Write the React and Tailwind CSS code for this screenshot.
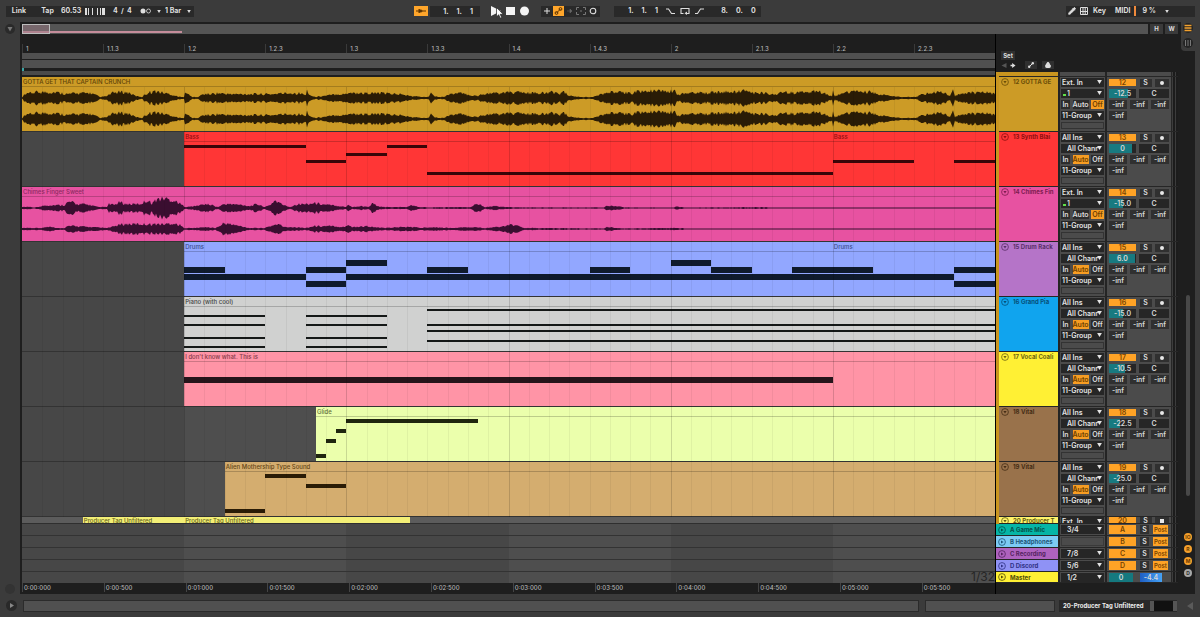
import { Fragment } from 'react';
import { Lock, Pencil } from 'lucide-react';

const BEATS = 6;
const pct = (beat) => `${(beat / BEATS) * 100}%`;

// each note is [start beat, end beat, top]
const chord = (start, end, tops) => tops.map((top) => [start, end, top]);

const tracks = [
    {
        name: '12 GOTTA GE', header: 'bg-[#cc9b26]', headerText: 'text-[#6b4e08]', audio: true, volume: '-12.5', fill: 72,
        wave: 'gold', clips: [{ title: 'GOTTA GET THAT CAPTAIN CRUNCH', start: 0, end: 6, color: 'bg-[#cc9b26]', text: 'text-[#5c4207]' }],
    },
    {
        name: '13 Synth Blai', header: 'bg-[#ff3636]', headerText: 'text-[#8f0f0f]', volume: '0', fill: 84, noteHeight: 3, noteColor: 'bg-[#3a0508]',
        clips: [
            { title: 'Bass', start: 1, end: 5, color: 'bg-[#ff3636]', text: 'text-[#8f0f0f]' },
            { title: 'Bass', start: 5, end: 6, color: 'bg-[#ff3636]', text: 'text-[#8f0f0f]' },
        ],
        notes: [[1, 1.75, 13], [1.75, 2, 28], [2, 2.25, 21], [2.25, 2.5, 13], [2.5, 5, 40], [5, 5.5, 28], [5.75, 6, 28]],
    },
    {
        name: '14 Chimes Fin', header: 'bg-[#e752a1]', headerText: 'text-[#7d1c50]', audio: true, volume: '-15.0', fill: 52,
        wave: 'pink', clips: [{ title: 'Chimes Finger Sweet', start: 0, end: 6, color: 'bg-[#e752a1]', text: 'text-[#8c2a60]' }],
    },
    {
        name: '15 Drum Rack', header: 'bg-[#b574c8]', headerText: 'text-[#5a2f68]', volume: '6.0', fill: 96, noteHeight: 6, noteColor: 'bg-[#0f1a2c]',
        clips: [
            { title: 'Drums', start: 1, end: 5, color: 'bg-[#92a7ff]', text: 'text-[#3c4d8c]' },
            { title: 'Drums', start: 5, end: 6, color: 'bg-[#92a7ff]', text: 'text-[#3c4d8c]' },
        ],
        notes: [
            [1, 1.25, 25], [1.75, 2, 25], [2.5, 2.75, 25], [3.5, 3.75, 25], [4.25, 4.5, 25], [4.75, 5.25, 25], [5.75, 6, 25],
            [1, 1.75, 32], [2, 5.75, 32], [1.75, 2, 39], [5.75, 6, 39], [2, 2.25, 18], [4, 4.25, 18],
        ],
    },
    {
        name: '16 Grand Pia', header: 'bg-[#10a4ee]', headerText: 'text-[#06507a]', volume: '-15.0', fill: 52, noteHeight: 2, noteColor: 'bg-[#141817]',
        clips: [{ title: 'Piano (with cool)', start: 1, end: 6, color: 'bg-[#d0d1d0]', text: 'text-[#444444]' }],
        notes: [...chord(1, 1.5, [18, 27, 40, 49]), ...chord(1.75, 2.25, [18, 27, 40, 49]), ...chord(2.5, 6, [12, 27, 33, 43])],
    },
    {
        name: '17 Vocal Coali', header: 'bg-[#fff034]', headerText: 'text-[#6d6510]', volume: '-10.5', fill: 60, noteHeight: 6, noteColor: 'bg-[#26141a]',
        clips: [{ title: "I don't know what. This is", start: 1, end: 6, color: 'bg-[#ff94a6]', text: 'text-[#843a48]' }],
        notes: [[1, 5, 25]],
    },
    {
        name: '18 Vital', header: 'bg-[#99724b]', headerText: 'text-[#452d15]', volume: '-22.5', fill: 40, noteHeight: 4, noteColor: 'bg-[#1f260f]',
        clips: [{ title: 'Glide', start: 1.8125, end: 6, color: 'bg-[#ebffac]', text: 'text-[#62703a]' }],
        notes: [[2, 2.8125, 12], [1.9375, 2, 22], [1.875, 1.9375, 32], [1.8125, 1.875, 47]],
    },
    {
        name: '19 Vital', header: 'bg-[#99724b]', headerText: 'text-[#452d15]', volume: '-25.0', fill: 36, noteHeight: 4, noteColor: 'bg-[#2a1c06]',
        clips: [{ title: 'Alien Mothership Type Sound', start: 1.25, end: 6, color: 'bg-[#d4ad6f]', text: 'text-[#654615]' }],
        notes: [[1.5, 1.75, 12], [1.75, 2, 22], [1.25, 1.5, 47]],
    },
];

const returns = [
    { id: 'A', name: 'A Game Mic', color: 'bg-[#05b5a6]', text: 'text-[#04514b]', out: '3/4' },
    { id: 'B', name: 'B Headphones', color: 'bg-[#7ccbf5]', text: 'text-[#1d5678]' },
    { id: 'C', name: 'C Recording', color: 'bg-[#ae62be]', text: 'text-[#54235f]', out: '7/8' },
    { id: 'D', name: 'D Discord', color: 'bg-[#8f92f5]', text: 'text-[#2f3184]', out: '5/6' },
];

const rulerLabels = [[0, '1'], [0.5, '1.1.3'], [1, '1.2'], [1.5, '1.2.3'], [2, '1.3'], [2.5, '1.3.3'], [3, '1.4'], [3.5, '1.4.3'], [4, '2'], [4.5, '2.1.3'], [5, '2.2'], [5.5, '2.2.3']];
const timeLabels = ['0:00:000', '0:00:500', '0:01:000', '0:01:500', '0:02:000', '0:02:500', '0:03:000', '0:03:500', '0:04:000', '0:04:500', '0:05:000', '0:05:500'];

// x, half height
const goldEnvelope = '22,0 24,3 30,5 37,6 45,6 55,6 62,5 68,4 75,5 90,5 96,3 100,1 107,2 112,5 118,6 125,6 130,5 136,2 142,1 145,4 150,6 154,7 160,6 165,5 170,4 176,2 182,1 184,1 185,8 188,4 192,1 198,1 203,4 210,4 218,5 230,4 270,4 285,5 300,5 306,3 307,8 310,3 315,1 322,2 330,3 337,4 345,4 349,6 355,5 380,5 400,4 410,2 425,1 429,2 431,8 434,2 440,1 446,2 449,4 460,5 470,3 478,2 482,4 490,5 500,5 515,6 530,5 545,5 553,6 560,5 564,6 568,3 572,2 580,1 592,1 597,2 600,4 607,5 612,6 630,5 638,7 675,7 677,3 685,5 695,6 705,5 715,6 735,6 742,7 747,8 753,5 765,5 775,4 785,6 795,5 803,6 812,7 822,6 828,3 832,2 833,8 835,2 841,4 848,6 858,7 865,6 872,6 877,4 885,3 892,2 900,1 915,1 920,3 928,5 938,6 945,5 950,2 953,8 955,2 960,4 970,6 980,5 988,6 995,4';
const pinkLeft = '22,1 30,1 35,.5 42,2 50,3 64,3 68,6 72,6 76,4 84,4 90,3 98,1 107,1 109,4 114,3 120,6 126,4 140,4 147,8 152,5 157,9 165,10 172,8 178,6 182,3 186,1 195,2 205,4 212,3 218,1 224,4 232,4 243,3 250,2 257,4 265,1 270,3 275,8 278,6 284,3 290,1 297,4 305,4 315,5 322,4 330,3 340,2 346,1 348,4 352,1 362,2 368,1 373,5 377,2 382,1 407,1 412,3 418,1 430,.8 470,.8 474,3 477,4 481,3 485,1 495,2 505,1 520,.6 604,.6 606,2 615,2 625,.6 674,.5 676,1.5 685,.5 760,.8 780,.5 995,.5';
const pinkRight = '22,1 42,1 50,3 56,1 64,1 68,3 75,3 90,2 107,1 112,2 118,4 124,5 165,5 172,6 180,4 184,1 195,1 205,2 215,1 222,4 223,6 230,5 240,3 250,1 265,1 273,4 278,5 285,2 297,2 305,1 315,3 330,3 345,2 348,5 352,2 368,3 372,2 385,1 400,2 415,2 420,1 430,2 452,1 472,2 485,1 497,2 507,3 512,5 518,3 524,1 604,.6 607,2 620,.6 675,1 690,.5 995,.5';

function wavePath(envelope, mid) {
    const points = envelope.split(' ').map((p) => p.split(',').map(Number));
    const top = [];
    const bottom = [];
    let k = 0;
    for (let x = 22; x <= 995; x++) {
        while (k < points.length - 2 && x > points[k + 1][0]) k++;
        const [x0, a0] = points[k];
        const [x1, a1] = points[k + 1];
        const amp = a0 + ((a1 - a0) * (x - x0)) / (x1 - x0);
        const noise = Math.abs(Math.sin(x * 12.9898) * 43758.5453) % 1;
        const h = Math.max(0.5, amp * (0.65 + noise * 0.6));
        top.push(`${x - 22},${(mid - h).toFixed(1)}`);
        bottom.unshift(`${x - 22},${(mid + h).toFixed(1)}`);
    }
    return `M${top.join('L')}L${bottom.join('L')}Z`;
}

const waves = {
    gold: { fill: '#2a1c06', d: wavePath(goldEnvelope, 21) + wavePath(goldEnvelope, 42) },
    pink: { fill: '#3a0e30', d: wavePath(pinkLeft, 21) + wavePath(pinkRight, 42) },
};

function Caret({ className }) {
    return <svg viewBox="0 0 6 5" className={className} aria-hidden="true"><path d="M0 0h6L3 5z" fill="currentColor" /></svg>;
}

function Dropdown({ label, value, indent }) {
    return (
        <div className="relative h-[9px] bg-[#262626] text-[#e4e4e4]">
            <select aria-label={label} className={`block h-[9px] w-full appearance-none pr-[6px] leading-[9px] outline-none ${indent ? 'pl-[6px]' : 'pl-px'}`}>
                <option>{value}</option>
            </select>
            <Caret className="pointer-events-none absolute top-[2px] right-[2px] h-[4px] w-[5px]" />
        </div>
    );
}

function Field({ label, value, className }) {
    return <input aria-label={label} defaultValue={value} className={`block h-[9px] min-w-0 p-0 text-center leading-[9px] text-[#d8d8d8] outline-none ${className}`} />;
}

function FoldButton({ label, right }) {
    return (
        <button aria-label={label} className="h-[8px] w-[8px] shrink-0">
            <svg viewBox="0 0 8 8" className="h-[8px] w-[8px]">
                <circle cx="4" cy="4" r="3.4" fill="none" stroke="currentColor" strokeWidth="0.8" />
                <path d={right ? 'M3 2.4 5.6 4 3 5.6z' : 'M2.4 3h3.2L4 5.6z'} fill="currentColor" />
            </svg>
        </button>
    );
}

function Clip({ clip }) {
    return (
        <div className={`absolute inset-y-0 overflow-hidden ${clip.color}`} style={{ left: pct(clip.start), width: pct(clip.end - clip.start) }}>
            <div className={`truncate pl-px text-[6px] font-medium ${clip.short ? 'leading-[7px]' : 'h-[10px] border-b border-black/20 leading-[9px]'} ${clip.text}`}>{clip.title}</div>
        </div>
    );
}

function Lane({ track }) {
    const wave = waves[track.wave];
    return (
        <div className="h-[55px] border-b border-[#333333]">
            <div className="relative h-full">
                {track.clips.map((clip) => <Clip key={clip.start} clip={clip} />)}
                {wave && (
                    <svg viewBox="0 0 973 54" preserveAspectRatio="none" className="absolute inset-0 h-full w-full">
                        <path d={wave.d} fill={wave.fill} />
                    </svg>
                )}
                {track.notes?.map(([start, end, top]) => (
                    <div key={`${start}-${top}`} className={`absolute ${track.noteColor}`} style={{ left: pct(start), width: pct(end - start), top, height: track.noteHeight }} />
                ))}
            </div>
        </div>
    );
}

function Grid() {
    const lines = Array.from({ length: 47 }, (_, i) => (i + 1) / 8);
    return (
        <div className="pointer-events-none absolute inset-0">
            {lines.map((beat) => (
                <div key={beat} className={`absolute top-[10px] bottom-0 w-px ${beat % 1 === 0 ? 'bg-black/15' : 'bg-black/5'}`} style={{ left: pct(beat) }} />
            ))}
        </div>
    );
}

function TopBar() {
    return (
        <header className="flex h-[22px] items-center pr-[5px] pl-[6px] text-[7px] leading-[10px] font-bold text-[#dedede]">
            <div className="flex h-[11px] items-center bg-[#292929]">
                <button className="w-[30px] pr-1 text-center">Link</button>
                <button className="ml-1 w-[15px] text-center">Tap</button>
                <input aria-label="Tempo" defaultValue="60.53" className="ml-[6px] w-[22px] outline-none" />
                <button aria-label="Nudge down" className="ml-[2px]"><svg viewBox="0 0 8 7" className="h-[7px] w-[8px]"><path d="M0 0h2v7H0zM3 0h1v7H3zM7 0h1v7H7z" fill="currentColor" /></svg></button>
                <button aria-label="Nudge up" className="ml-1"><svg viewBox="0 0 8 7" className="h-[7px] w-[8px]"><path d="M0 0h1v7H0zM3 0h1v7H3zM5 0h3v7H5z" fill="currentColor" /></svg></button>
                <span className="ml-2 w-[22px] whitespace-pre">4  /  4</span>
                <button aria-label="Metronome" className="ml-[5px]">
                    <svg viewBox="0 0 11 6" className="h-[6px] w-[11px]"><circle cx="3" cy="3" r="2.5" fill="currentColor" /><circle cx="8.5" cy="3" r="2" fill="none" stroke="currentColor" strokeWidth="0.8" /></svg>
                </button>
                <Caret className="ml-[6px] h-[3px] w-[4px]" />
                <div className="relative ml-1 w-[26px]">
                    <select aria-label="Quantization" className="block w-full appearance-none outline-none"><option>1 Bar</option></select>
                    <Caret className="pointer-events-none absolute top-1 right-0 h-[3px] w-[4px]" />
                </div>
                <span className="w-[3px]" />
            </div>

            <div className="flex-[13]" />

            <div className="flex h-[11px] items-center">
                <button aria-label="Follow" className="flex h-[10px] w-[14px] items-center justify-center bg-[#ffa62b] text-[#5c3300]">
                    <svg viewBox="0 0 12 6" className="h-[6px] w-[12px]"><path d="M1 3h10M4 1v4M6 1.5v3" stroke="currentColor" fill="none" /><path d="M4 1l4 2-4 2z" fill="currentColor" /></svg>
                </button>
                <input aria-label="Position" defaultValue="1.     1.     1" className="ml-[2px] h-[11px] w-[50px] bg-[#292929] pl-[13px] outline-none" />
                <div className="relative ml-[11px] flex items-center gap-[5px] text-[#f4f4f4]">
                    <button aria-label="Play"><svg viewBox="0 0 10 10" className="h-[10px] w-[10px]"><path d="M0 0l10 5-10 5z" fill="currentColor" /></svg></button>
                    <button aria-label="Stop"><svg viewBox="0 0 9 10" className="h-[10px] w-[9px]"><path d="M0 1h9v8H0z" fill="currentColor" /></svg></button>
                    <button aria-label="Record"><svg viewBox="0 0 9 10" className="h-[10px] w-[9px]"><circle cx="4.5" cy="5" r="4.5" fill="currentColor" /></svg></button>
                    <svg viewBox="0 0 8 12" className="pointer-events-none absolute top-px left-[5px] h-[12px] w-[8px]">
                        <path d="M.5.5v9.3l2.2-2 1.5 3.4 1.5-.7-1.5-3.2h3z" fill="#fff" stroke="#222" strokeWidth="0.7" />
                    </svg>
                </div>
                <div className="ml-3 flex h-[11px] w-[59px] items-center justify-between bg-[#292929] px-[3px]">
                    <button aria-label="Overdub"><svg viewBox="0 0 6 6" className="h-[6px] w-[6px]"><path d="M3 0v6M0 3h6" stroke="currentColor" /></svg></button>
                    <button aria-label="Automation arm" className="bg-[#ffa62b] text-[#5c3300]"><svg viewBox="0 0 11 10" className="h-[10px] w-[11px]"><path d="M3.5 7l4-4" stroke="currentColor" /><circle cx="3.5" cy="7" r="1.4" fill="none" stroke="currentColor" /><circle cx="7.5" cy="3" r="1.4" fill="none" stroke="currentColor" /></svg></button>
                    <button aria-label="Re-enable automation" className="text-[#666666]"><svg viewBox="0 0 6 6" className="h-[6px] w-[6px]"><path d="M0 3h3M3 1l2 2-2 2z" fill="currentColor" stroke="currentColor" strokeWidth="0.6" /></svg></button>
                    <button aria-label="Capture" className="text-[#777777]"><svg viewBox="0 0 10 8" className="h-[8px] w-[10px]"><path d="M.5 3V.5H3M7 .5h2.5V3M9.5 5v2.5H7M3 7.5H.5V5M4 4h2" fill="none" stroke="currentColor" /></svg></button>
                    <button aria-label="Session record"><svg viewBox="0 0 8 8" className="h-[8px] w-[8px]"><circle cx="4" cy="4" r="2.8" fill="none" stroke="currentColor" strokeWidth="1.1" /></svg></button>
                </div>
                <div className="ml-[14px] flex h-[11px] w-[147px] items-center bg-[#292929]">
                    <input aria-label="Loop start" defaultValue="1.     1.     1" className="ml-[14px] w-[38px] outline-none" />
                    <button aria-label="Punch in"><svg viewBox="0 0 9 7" className="h-[7px] w-[9px]"><path d="M0 1h2.5l3 4.5H9" fill="none" stroke="currentColor" strokeWidth="1.1" /></svg></button>
                    <button aria-label="Loop" className="ml-[5px]"><svg viewBox="0 0 10 8" className="h-[8px] w-[10px]"><path d="M3.5 6.5H1v-5h8v5H7" fill="none" stroke="currentColor" strokeWidth="1.1" /><path d="M7 4.5V8L4.5 6.3z" fill="currentColor" /></svg></button>
                    <button aria-label="Punch out" className="ml-[5px]"><svg viewBox="0 0 9 7" className="h-[7px] w-[9px]"><path d="M0 5.5h2.5L5.5 1H9" fill="none" stroke="currentColor" strokeWidth="1.1" /></svg></button>
                    <input aria-label="Loop length" defaultValue="8.     0.     0" className="ml-[17px] w-[42px] outline-none" />
                </div>
            </div>

            <div className="flex-[18]" />

            <div className="flex h-[11px] w-[129px] items-center bg-[#292929]">
                <button aria-label="Draw mode" className="ml-[2px]"><Pencil className="h-[8px] w-[8px]" strokeWidth={3} fill="currentColor" /></button>
                <button aria-label="Computer MIDI keyboard" className="ml-1">
                    <svg viewBox="0 0 8 8" className="h-[8px] w-[8px]"><path d="M.5.5h7v7h-7zM3 0v8M5.2 0v8M.5 4.5h7" fill="none" stroke="currentColor" strokeWidth="1" /></svg>
                </button>
                <button className="ml-[5px]">Key</button>
                <button className="ml-[9px]">MIDI</button>
                <span className="ml-[3px] h-[10px] w-[2px] bg-[#f08a3c]" />
                <span className="ml-[7px] whitespace-nowrap">9 %</span>
                <Caret className="ml-[9px] h-[3px] w-[4px]" />
            </div>
        </header>
    );
}

function Overview() {
    return (
        <div className="flex h-[10px] items-stretch gap-[2px] pl-[2px] text-[6px] leading-[10px] font-bold text-[#dddddd]">
            <div className="relative flex-1 bg-[#545454]">
                <div className="mt-[7px] h-[2px] w-[160px] bg-[#c58d9b]" />
                <div className="absolute top-0 left-0 h-[10px] w-[28px] border border-[#bdbdbd] bg-[#9a7a84]/50" />
            </div>
            <button className="w-[13px] bg-[#3a3a3a]">H</button>
            <button className="mr-[3px] w-[13px] bg-[#3a3a3a]">W</button>
        </div>
    );
}

function Timeline() {
    return (
        <div className="min-w-0 flex-1 pl-[2px]">
            <div className="relative h-[19px] text-[6px] leading-[9px] font-medium text-[#b4b4b4]">
                {rulerLabels.map(([beat, label]) => (
                    <span key={label} className="absolute bottom-0 border-l border-[#3a3a3a] pl-[3px]" style={{ left: pct(beat) }}>{label}</span>
                ))}
            </div>
            <div className="h-[6px] bg-[#505050]" />
            <div className="mt-px h-[8px] bg-[#505050]" />
            <div className="h-[3px] w-[2px] bg-[#3ba7a7]" />
            <div className="mb-[2px] h-[4px] bg-[#4a4a4a]" />
            <div className="relative">
                <div className="absolute inset-0 grid grid-cols-6">
                    {[0, 1, 2, 3, 4, 5].map((i) => <div key={i} className={i % 2 ? 'bg-[#4e4e4e]' : 'bg-[#474747]'} />)}
                </div>
                <div className="relative">
                    {tracks.map((track) => <Lane key={track.name} track={track} />)}
                    <Grid />
                </div>
                <div className="relative h-[7px] overflow-hidden border-b border-[#2f2f2f] bg-[#5c5c5c]">
                    <Clip clip={{ title: 'Producer Tag Unfiltered', start: 0.375, end: 1, color: 'bg-[#f3ef76]', text: 'text-[#66631c]', short: true }} />
                    <Clip clip={{ title: 'Producer Tag Unfiltered', start: 1, end: 2.39, color: 'bg-[#f3ef76]', text: 'text-[#66631c]', short: true }} />
                </div>
                {returns.map((r) => <div key={r.id} className="relative h-[12px] border-b border-[#333333]" />)}
                <div className="relative h-[11px]">
                    <span className="absolute right-0 bottom-0 text-[12px] leading-[13px] text-[#262626]">1/32</span>
                </div>
            </div>
            <div className="relative h-[11px] text-[6px] leading-[9px] font-medium text-[#b4b4b4]">
                {timeLabels.map((label, i) => (
                    <span key={label} className="absolute top-0 border-l border-[#444444] pl-px" style={{ left: pct(i * 0.5044) }}>{label}</span>
                ))}
            </div>
        </div>
    );
}

function Monitor({ audio }) {
    const on = 'bg-[#f79d23] text-[#6e3f00]';
    return (
        <div className="flex h-[9px] justify-between leading-[9px]">
            <button className="w-[9px] bg-[#2c2c2c]">In</button>
            <button className={`w-[16px] ${audio ? 'bg-[#2c2c2c]' : on}`}>Auto</button>
            <button className={`w-[13px] ${audio ? on : 'bg-[#2c2c2c]'}`}>Off</button>
        </div>
    );
}

function Meter() {
    return (
        <div className="ml-auto flex w-[7px] justify-center gap-px border-l border-[#262626] bg-[#3c3c3c]">
            <span className="w-[2px] bg-[#1c1c1c]" />
            <span className="w-[2px] bg-[#1c1c1c]" />
        </div>
    );
}

function TrackHeader({ track, index }) {
    const number = index + 12;
    return (
        <div className="flex h-[55px] border-b border-[#262626]">
            <div className={`flex w-[59px] items-start gap-1 overflow-hidden pt-px pl-[2px] ${track.header} ${track.headerText}`}>
                <FoldButton label={`Fold ${track.name}`} />
                <span className="text-[6px] leading-[8px] font-bold whitespace-nowrap">{track.name}</span>
            </div>
            <div className="flex w-[49px] flex-col gap-[2px] border-x-2 border-[#242424] px-px pt-px">
                <Dropdown label={`${track.name} input`} value={track.audio ? 'Ext. In' : 'All Ins'} />
                <div className="relative">
                    <Dropdown label={`${track.name} channel`} value={track.audio ? '1' : 'All Channels'} indent />
                    {track.audio && <span className="absolute bottom-[2px] left-[2px] h-[2px] w-[3px] bg-[#5fe04a]" />}
                </div>
                <Monitor audio={track.audio} />
                <Dropdown label={`${track.name} output`} value="11-Group" />
                <div className="h-[7px] border border-[#333333]" />
            </div>
            <div className="flex w-[62px] flex-col gap-[2px] pt-px pl-[2px]">
                <div className="flex h-[9px] items-center justify-between leading-[8px]">
                    <button className="h-[7px] w-[27px] bg-[#ffa326] leading-[7px] text-[#7a4400]">{number}</button>
                    <button className="h-[8px] w-[12px] bg-[#303030]">S</button>
                    <button aria-label={`Arm ${track.name}`} className="flex h-[8px] w-[14px] items-center justify-center bg-[#303030]">
                        <span className="h-[4px] w-[4px] rounded-full bg-[#e8e8e8]" />
                    </button>
                </div>
                <div className="flex h-[9px] gap-[3px]">
                    <div className="relative w-[27px] bg-[#262626]">
                        <div className="absolute inset-y-0 left-0 bg-[#187a80]" style={{ width: `${track.fill}%` }} />
                        <Field label={`${track.name} volume`} value={track.volume} className="relative w-full" />
                    </div>
                    <Field label={`${track.name} pan`} value="C" className="flex-1 bg-[#262626]" />
                </div>
                <div className="flex h-[9px] justify-between">
                    {['A', 'B', 'C'].map((s) => <Field key={s} label={`${track.name} send ${s}`} value="-inf" className="w-[18px] bg-[#303030]" />)}
                </div>
                <Field label={`${track.name} send D`} value="-inf" className="w-[18px] bg-[#303030]" />
            </div>
            <Meter />
        </div>
    );
}

function ReturnHeader({ item, master }) {
    return (
        <div className={`flex border-b border-[#262626] ${master ? 'h-[11px]' : 'h-[12px]'}`}>
            <div className={`flex w-[62px] items-center gap-1 overflow-hidden pl-[2px] ${item.color} ${item.text}`}>
                <FoldButton label={`Fold ${item.name}`} right />
                <span className="text-[6px] leading-[9px] font-bold whitespace-nowrap">{item.name}</span>
            </div>
            <div className="w-[49px] border-x-2 border-[#242424] px-px pt-px">
                {item.out ? <Dropdown label={`${item.name} output`} value={item.out} indent /> : <div className="h-[9px] border border-[#3a3a3a]" />}
            </div>
            <div className="flex w-[62px] items-center gap-1 pl-[2px] leading-[9px]">
                {master ? (
                    <Fragment>
                        <Field label="Master volume" value="0" className="w-[24px] bg-[#15797f]" />
                        <Field label="Cue volume" value="-4.4" className="ml-[3px] w-[22px] bg-linear-to-r from-[#1f5fc4] to-[#46a2f5]" />
                    </Fragment>
                ) : (
                    <Fragment>
                        <button className="h-[9px] w-[27px] bg-[#ffa326] text-[#7a4400]">{item.id}</button>
                        <button className="h-[9px] w-[9px] bg-[#303030]">S</button>
                        <button className="h-[9px] w-[15px] bg-[#ffa326] text-[6px] text-[#7a4400]">Post</button>
                    </Fragment>
                )}
            </div>
            <Meter />
        </div>
    );
}

function Headers() {
    return (
        <div className="w-[183px] shrink-0 border-l border-black text-[7px] font-semibold text-[#dedede]">
            <div className="h-[38px] pt-[17px] pl-[5px]">
                <button className="block h-[9px] w-[14px] bg-[#303030] text-center text-[6px] leading-[9px] font-bold">Set</button>
                <div className="mt-px flex items-center text-[6px] leading-[8px]">
                    <button aria-label="Previous locator" className="h-[8px] w-[9px] text-[#555555]"><svg viewBox="0 0 6 6" className="h-[5px] w-[6px]"><path d="M6 0v6L0 3z" fill="currentColor" /></svg></button>
                    <button aria-label="Next locator" className="h-[8px] w-[11px]"><svg viewBox="0 0 6 6" className="h-[5px] w-[6px]"><path d="M0 2h2V0l4 3-4 3V4H0z" fill="currentColor" /></svg></button>
                    <button aria-label="Automation mode" className="ml-1 flex h-[8px] w-[12px] items-center justify-center bg-[#303030]"><svg viewBox="0 0 6 6" className="h-[6px] w-[6px]"><path d="M1 5l4-4" stroke="currentColor" /><circle cx="1.2" cy="4.8" r="1.2" fill="currentColor" /><circle cx="4.8" cy="1.2" r="1.2" fill="currentColor" /></svg></button>
                    <button aria-label="Lock envelopes" className="ml-[5px] flex h-[8px] w-[12px] items-center justify-center bg-[#303030]"><Lock className="h-[6px] w-[6px]" strokeWidth={4} fill="currentColor" /></button>
                </div>
            </div>
            <div className="bg-[#4b4b4b]">
                <div className="border-l-[3px] border-[#c9951f]">
                    <div className="flex h-[5px] border-b border-[#262626]">
                        <div className="w-[59px] bg-[#c9951f]" />
                        <div className="w-[49px] border-x-2 border-[#242424]" />
                        <Meter />
                    </div>
                    {tracks.map((track, i) => <TrackHeader key={track.name} track={track} index={i} />)}
                    <div className="flex h-[7px] overflow-hidden border-b border-[#262626]">
                        <div className="flex w-[59px] items-start gap-1 overflow-hidden bg-[#fff36b] pl-[2px] text-[#5f5a10]">
                            <FoldButton label="Fold 20 Producer Tag" />
                            <span className="text-[6px] leading-[8px] font-bold whitespace-nowrap">20 Producer T</span>
                        </div>
                        <div className="w-[49px] border-x-2 border-[#242424] px-px">
                            <Dropdown label="20 Producer input" value="Ext. In" />
                        </div>
                        <div className="flex w-[62px] justify-between pl-[2px] leading-[8px]">
                            <button className="h-[8px] w-[27px] bg-[#ffa326] text-[#7a4400]">20</button>
                            <button className="h-[8px] w-[12px] bg-[#303030]">S</button>
                            <button aria-label="Arm 20 Producer" className="flex h-[8px] w-[14px] items-center justify-center bg-[#303030]"><span className="h-[4px] w-[4px] bg-[#e8e8e8]" /></button>
                        </div>
                        <Meter />
                    </div>
                </div>
                {returns.map((item) => <ReturnHeader key={item.id} item={item} />)}
                <ReturnHeader master item={{ name: 'Master', color: 'bg-[#fff034]', text: 'text-[#4f4a0a]', out: '1/2' }} />
            </div>
        </div>
    );
}

function SideStrip() {
    return (
        <div className="flex w-[14px] shrink-0 flex-col">
            <div className="flex h-[29px] flex-col items-center gap-[5px] rounded-bl-sm bg-[#3b3b3b] pt-px">
                <button aria-label="Arrangement view" className="h-[10px] w-[10px] rounded-full bg-[#242424] text-[#f2a12e]">
                    <svg viewBox="0 0 10 10" className="h-[10px] w-[10px]"><path d="M1.5 2.5h7M1.5 5h7M1.5 7.5h7" stroke="currentColor" strokeWidth="1.4" /></svg>
                </button>
                <button aria-label="Session view" className="h-[10px] w-[10px] rounded-full bg-[#242424] text-[#777777]">
                    <svg viewBox="0 0 10 10" className="h-[10px] w-[10px]"><path d="M2.5 2v6M5 2v6M7.5 2v6" stroke="currentColor" /></svg>
                </button>
            </div>
            <div className="flex flex-1 flex-col items-center justify-end">
                <div className="mb-[37px] h-[201px] w-[4px] rounded-sm bg-[#484848]" />
                <div className="mb-[17px] flex flex-col gap-[4px] text-[5px] leading-[8px] font-bold">
                    <button className="h-[8px] w-[8px] rounded-full bg-[#f5a02c] text-[#6a3b00]">IO</button>
                    <button className="h-[8px] w-[8px] rounded-full bg-[#f5a02c] text-[#6a3b00]">R</button>
                    <button className="h-[8px] w-[8px] rounded-full bg-[#f5a02c] text-[#6a3b00]">M</button>
                    <button className="h-[8px] w-[8px] rounded-full bg-[#a8a8a8] text-[#333333]">D</button>
                </div>
            </div>
        </div>
    );
}

function StatusBar() {
    return (
        <footer className="flex h-[23px] items-center pr-[6px] text-[6px] leading-[12px] font-bold text-[#eeeeee]">
            <button aria-label="Show clip view" className="ml-[6px] h-[11px] w-[11px] rounded-full bg-[#292929] text-[#888888]">
                <svg viewBox="0 0 11 11" className="h-[11px] w-[11px]"><path d="M4 3l4 2.5L4 8z" fill="currentColor" /></svg>
            </button>
            <div className="ml-[6px] h-[12px] flex-[7] border border-[#2b2b2b] bg-[#505050]" />
            <div className="ml-[6px] h-[12px] flex-1 border border-[#2b2b2b] bg-[#505050]" />
            <div className="ml-[4px] flex h-[12px] items-center bg-[#292929] pl-1">
                <span className="w-[87px] whitespace-nowrap">20-Producer Tag Unfiltered</span>
                <div className="flex h-[10px] w-[27px] border-x-4 border-[#555555] bg-[#111111]" />
            </div>
            <button aria-label="Show device view" className="ml-[9px] text-[#5a5a5a]"><svg viewBox="0 0 8 8" className="h-[8px] w-[8px]"><path d="M7 0v8L1 4z" fill="currentColor" /></svg></button>
        </footer>
    );
}

export default function App() {
    return (
        <div className="min-h-screen bg-[#3b3b3b] font-[Inter,sans-serif]">
            <TopBar />
            <div className="flex pr-[5px]">
                <div className="flex w-5 shrink-0 flex-col items-center justify-between pt-[2px]">
                    <button aria-label="Show browser" className="h-[10px] w-[10px] rounded-full bg-[#2a2a2a] text-[#777777]">
                        <svg viewBox="0 0 10 10" className="h-[10px] w-[10px]"><path d="M2.5 3h5L5 7.5z" fill="currentColor" /></svg>
                    </button>
                    <button aria-label="Show help" className="h-[10px] w-[10px] rounded-full bg-[#333333]" />
                </div>
                <main className="flex min-w-0 flex-1 bg-[#1e1e1e]">
                    <div className="min-w-0 flex-1 pt-[2px]">
                        <Overview />
                        <div className="flex pr-[3px]">
                            <Timeline />
                            <Headers />
                        </div>
                    </div>
                    <SideStrip />
                </main>
            </div>
            <StatusBar />
        </div>
    );
}
